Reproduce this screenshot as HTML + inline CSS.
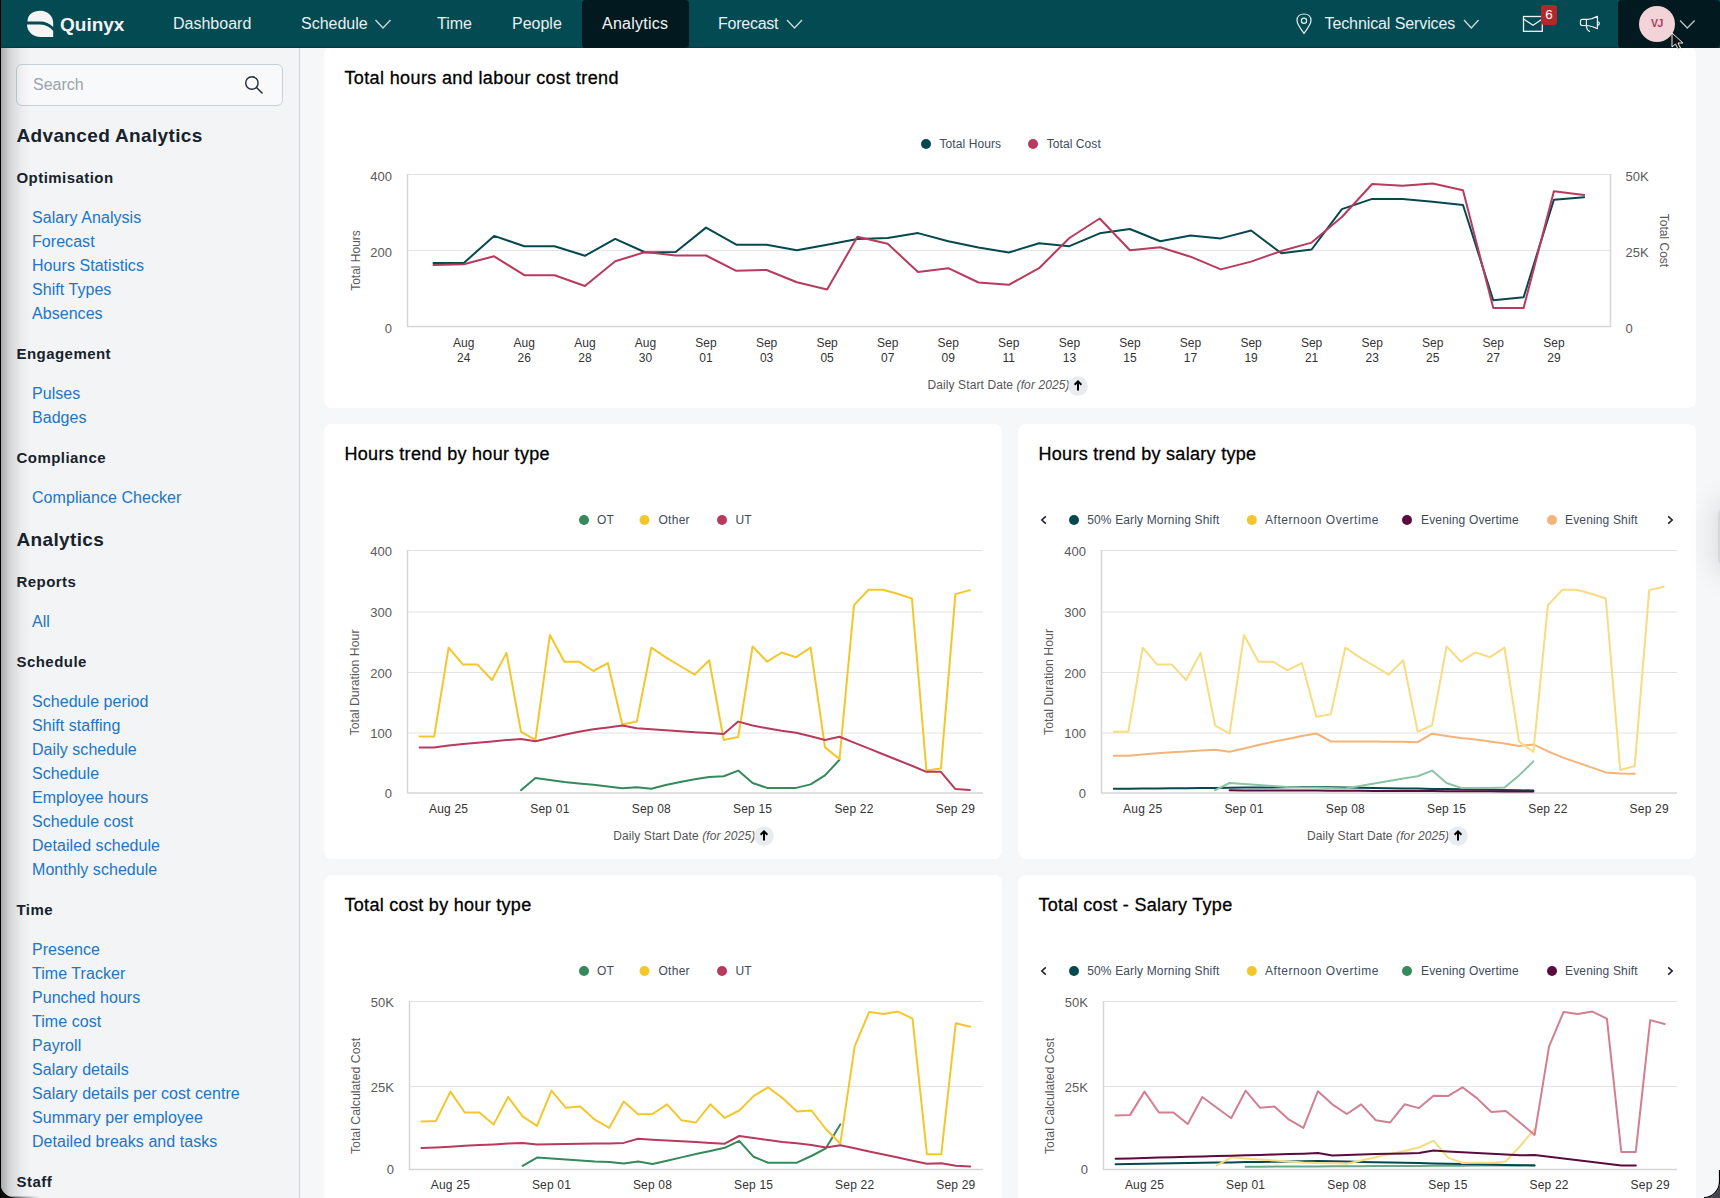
<!DOCTYPE html><html><head><meta charset="utf-8"><style>
html,body{margin:0;padding:0;width:1720px;height:1198px;overflow:hidden;background:#f6f7f9;font-family:"Liberation Sans", sans-serif;}
.abs{position:absolute;}
</style></head><body>
<div class="abs" style="left:300px;top:48px;width:1420px;height:1150px;background:#f6f7f9"></div>
<div class="abs" style="left:324px;top:47px;width:1372px;height:361px;background:#fff;border-radius:8px"></div>
<div class="abs" style="left:324px;top:424px;width:678px;height:435px;background:#fff;border-radius:8px"></div>
<div class="abs" style="left:1018px;top:424px;width:678px;height:435px;background:#fff;border-radius:8px"></div>
<div class="abs" style="left:324px;top:875px;width:678px;height:400px;background:#fff;border-radius:8px"></div>
<div class="abs" style="left:1018px;top:875px;width:678px;height:400px;background:#fff;border-radius:8px"></div>
<div class="abs" style="left:0;top:48px;width:299px;height:1150px;background:#f3f4f6;border-right:1px solid #c9d3dc"></div>
<div class="abs" style="left:16px;top:64px;width:265px;height:40px;background:#f8f9fb;border:1px solid #c6d1db;border-radius:6px"></div>
<div class="abs" style="left:1718px;top:503px;width:40px;height:68px;border-radius:14px;background:#d8d8dc;box-shadow:0 0 26px 6px rgba(0,0,0,0.10)"></div>
<div class="abs" style="left:1px;top:48px;width:30px;height:1150px;background:linear-gradient(to right,rgba(0,0,0,0.30),rgba(0,0,0,0.12) 30%,rgba(0,0,0,0.03) 70%,rgba(0,0,0,0))"></div>
<div class="abs" style="left:0;top:0;width:1720px;height:48px;background:#034a53"></div>
<div class="abs" style="left:0;top:47px;width:1720px;height:1px;background:#023a43"></div>
<div class="abs" style="left:582px;top:0;width:107px;height:48px;background:#021a1f;border-radius:4px"></div>
<div class="abs" style="left:1618px;top:0;width:102px;height:48px;background:#021a1f;border-radius:4px"></div>
<div class="abs" style="left:0;top:0;width:1px;height:1198px;background:#000;z-index:5"></div>
<svg class="abs" style="left:0;top:0" width="1720" height="1198" viewBox="0 0 1720 1198" font-family=""Liberation Sans", sans-serif">
<path d="M27.5,21.5 C27.5,14.5 33,10.8 40.5,10.8 C47.5,10.8 53.2,16 53.2,23 L53.2,27 C50,23.5 45,21.5 40,21.5 Z" fill="#f4f4f4"/>
<path d="M27,24.5 L40,24.5 C46,24.5 50.5,27.5 53.2,31 L53.2,37 L40.5,37 C33,37 27,31.5 27,24.5 Z" fill="#f4f4f4"/>
<text x="60" y="31" font-size="19" fill="#f4f4f4" text-anchor="start" font-weight="bold" font-style="normal" >Quinyx</text>
<text x="173" y="29" font-size="16" fill="#e9eff0" text-anchor="start" font-weight="normal" font-style="normal" >Dashboard</text>
<text x="301" y="29" font-size="16" fill="#e9eff0" text-anchor="start" font-weight="normal" font-style="normal" >Schedule</text>
<polyline points="375.5,20 383,28 390.5,20" fill="none" stroke="#cfdadc" stroke-width="1.3"/>
<text x="437" y="29" font-size="16" fill="#e9eff0" text-anchor="start" font-weight="normal" font-style="normal" >Time</text>
<text x="512" y="29" font-size="16" fill="#e9eff0" text-anchor="start" font-weight="normal" font-style="normal" >People</text>
<text x="602" y="29" font-size="16" fill="#f2f5f5" text-anchor="start" font-weight="normal" font-style="normal" letter-spacing="0.25" >Analytics</text>
<text x="718" y="29" font-size="16" fill="#e9eff0" text-anchor="start" font-weight="normal" font-style="normal" letter-spacing="-0.25" >Forecast</text>
<polyline points="787,20 794.5,28 802,20" fill="none" stroke="#cfdadc" stroke-width="1.3"/>
<path d="M1304,33.5 C1300,28 1297,24 1297,20.5 C1297,16.5 1300,14 1304,14 C1308,14 1311,16.5 1311,20.5 C1311,24 1308,28 1304,33.5 Z" fill="none" stroke="#e9eff0" stroke-width="1.2"/>
<circle cx="1304" cy="20.8" r="2.6" fill="none" stroke="#e9eff0" stroke-width="1.2"/>
<text x="1324.5" y="28.6" font-size="16" fill="#e9eff0" text-anchor="start" font-weight="normal" font-style="normal" letter-spacing="-0.1" >Technical Services</text>
<polyline points="1464,20 1471.3,28 1478.6,20" fill="none" stroke="#cfdadc" stroke-width="1.3"/>
<rect x="1523.5" y="16.5" width="18.8" height="14.8" fill="none" stroke="#f0f4f4" stroke-width="1.3"/>
<polyline points="1524,19.2 1533,25.3 1542,19.2" fill="none" stroke="#f0f4f4" stroke-width="1.3"/>
<rect x="1541" y="5" width="16" height="20" rx="3" fill="#b3282d"/>
<text x="1549" y="19.2" font-size="13.5" fill="#fff" text-anchor="middle" font-weight="normal" font-style="normal" >6</text>
<path d="M1597.4,16.3 L1597.4,28.6 L1592.7,26.7 L1588.7,25.8 L1582.3,25.5 Q1580.4,25.5 1580.4,23.5 L1580.4,21.3 Q1580.4,19.3 1582.3,19.3 L1588.5,19.3 L1592,18.6 Z M1586.4,19.3 L1586.4,26 C1586.4,28.5 1587.5,30.3 1589.5,31.5 M1597.5,21.9 C1600,21.9 1600,25.3 1597.5,25.3" fill="none" stroke="#f0f4f4" stroke-width="1.15" stroke-linejoin="round" stroke-linecap="round"/>
<circle cx="1657" cy="24" r="18" fill="#f2d4d8"/>
<text x="1657" y="27.2" font-size="10.5" fill="#b8385c" text-anchor="middle" font-weight="bold" font-style="normal" letter-spacing="-0.4" >VJ</text>
<polyline points="1680,20.5 1687.3,28 1694.6,20.5" fill="none" stroke="#b9c4c6" stroke-width="1.3"/>
<path d="M1672,33 L1672,47 L1675.5,44 L1678,49 L1680.5,48 L1678,43 L1683,43 Z" fill="#111" stroke="#eee" stroke-width="1"/>
<text x="33" y="90" font-size="16" fill="#9ba3ab" text-anchor="start" font-weight="normal" font-style="normal" >Search</text>
<circle cx="251.9" cy="83" r="6.2" fill="none" stroke="#1f2a33" stroke-width="1.4"/>
<line x1="256.5" y1="87.5" x2="262.5" y2="93.5" stroke="#1f2a33" stroke-width="1.4"/>
<text x="16.5" y="142" font-size="19" fill="#17222c" text-anchor="start" font-weight="bold" font-style="normal" letter-spacing="0.35" >Advanced Analytics</text>
<text x="16.5" y="183" font-size="15" fill="#17222c" text-anchor="start" font-weight="bold" font-style="normal" letter-spacing="0.45" >Optimisation</text>
<text x="32" y="223" font-size="16" fill="#2176c3" text-anchor="start" font-weight="normal" font-style="normal" letter-spacing="0.05" >Salary Analysis</text>
<text x="32" y="247" font-size="16" fill="#2176c3" text-anchor="start" font-weight="normal" font-style="normal" letter-spacing="0.05" >Forecast</text>
<text x="32" y="271" font-size="16" fill="#2176c3" text-anchor="start" font-weight="normal" font-style="normal" letter-spacing="0.05" >Hours Statistics</text>
<text x="32" y="295" font-size="16" fill="#2176c3" text-anchor="start" font-weight="normal" font-style="normal" letter-spacing="0.05" >Shift Types</text>
<text x="32" y="319" font-size="16" fill="#2176c3" text-anchor="start" font-weight="normal" font-style="normal" letter-spacing="0.05" >Absences</text>
<text x="16.5" y="359" font-size="15" fill="#17222c" text-anchor="start" font-weight="bold" font-style="normal" letter-spacing="0.45" >Engagement</text>
<text x="32" y="399" font-size="16" fill="#2176c3" text-anchor="start" font-weight="normal" font-style="normal" letter-spacing="0.05" >Pulses</text>
<text x="32" y="423" font-size="16" fill="#2176c3" text-anchor="start" font-weight="normal" font-style="normal" letter-spacing="0.05" >Badges</text>
<text x="16.5" y="463" font-size="15" fill="#17222c" text-anchor="start" font-weight="bold" font-style="normal" letter-spacing="0.45" >Compliance</text>
<text x="32" y="503" font-size="16" fill="#2176c3" text-anchor="start" font-weight="normal" font-style="normal" letter-spacing="0.05" >Compliance Checker</text>
<text x="16.5" y="546" font-size="19" fill="#17222c" text-anchor="start" font-weight="bold" font-style="normal" letter-spacing="0.35" >Analytics</text>
<text x="16.5" y="587" font-size="15" fill="#17222c" text-anchor="start" font-weight="bold" font-style="normal" letter-spacing="0.45" >Reports</text>
<text x="32" y="627" font-size="16" fill="#2176c3" text-anchor="start" font-weight="normal" font-style="normal" letter-spacing="0.05" >All</text>
<text x="16.5" y="667" font-size="15" fill="#17222c" text-anchor="start" font-weight="bold" font-style="normal" letter-spacing="0.45" >Schedule</text>
<text x="32" y="707" font-size="16" fill="#2176c3" text-anchor="start" font-weight="normal" font-style="normal" letter-spacing="0.05" >Schedule period</text>
<text x="32" y="731" font-size="16" fill="#2176c3" text-anchor="start" font-weight="normal" font-style="normal" letter-spacing="0.05" >Shift staffing</text>
<text x="32" y="755" font-size="16" fill="#2176c3" text-anchor="start" font-weight="normal" font-style="normal" letter-spacing="0.05" >Daily schedule</text>
<text x="32" y="779" font-size="16" fill="#2176c3" text-anchor="start" font-weight="normal" font-style="normal" letter-spacing="0.05" >Schedule</text>
<text x="32" y="803" font-size="16" fill="#2176c3" text-anchor="start" font-weight="normal" font-style="normal" letter-spacing="0.05" >Employee hours</text>
<text x="32" y="827" font-size="16" fill="#2176c3" text-anchor="start" font-weight="normal" font-style="normal" letter-spacing="0.05" >Schedule cost</text>
<text x="32" y="851" font-size="16" fill="#2176c3" text-anchor="start" font-weight="normal" font-style="normal" letter-spacing="0.05" >Detailed schedule</text>
<text x="32" y="875" font-size="16" fill="#2176c3" text-anchor="start" font-weight="normal" font-style="normal" letter-spacing="0.05" >Monthly schedule</text>
<text x="16.5" y="915" font-size="15" fill="#17222c" text-anchor="start" font-weight="bold" font-style="normal" letter-spacing="0.45" >Time</text>
<text x="32" y="955" font-size="16" fill="#2176c3" text-anchor="start" font-weight="normal" font-style="normal" letter-spacing="0.05" >Presence</text>
<text x="32" y="979" font-size="16" fill="#2176c3" text-anchor="start" font-weight="normal" font-style="normal" letter-spacing="0.05" >Time Tracker</text>
<text x="32" y="1003" font-size="16" fill="#2176c3" text-anchor="start" font-weight="normal" font-style="normal" letter-spacing="0.05" >Punched hours</text>
<text x="32" y="1027" font-size="16" fill="#2176c3" text-anchor="start" font-weight="normal" font-style="normal" letter-spacing="0.05" >Time cost</text>
<text x="32" y="1051" font-size="16" fill="#2176c3" text-anchor="start" font-weight="normal" font-style="normal" letter-spacing="0.05" >Payroll</text>
<text x="32" y="1075" font-size="16" fill="#2176c3" text-anchor="start" font-weight="normal" font-style="normal" letter-spacing="0.05" >Salary details</text>
<text x="32" y="1099" font-size="16" fill="#2176c3" text-anchor="start" font-weight="normal" font-style="normal" letter-spacing="0.05" >Salary details per cost centre</text>
<text x="32" y="1123" font-size="16" fill="#2176c3" text-anchor="start" font-weight="normal" font-style="normal" letter-spacing="0.05" >Summary per employee</text>
<text x="32" y="1147" font-size="16" fill="#2176c3" text-anchor="start" font-weight="normal" font-style="normal" letter-spacing="0.05" >Detailed breaks and tasks</text>
<text x="16.5" y="1187" font-size="15" fill="#17222c" text-anchor="start" font-weight="bold" font-style="normal" letter-spacing="0.45" >Staff</text>
<text x="344.5" y="84" font-size="18" fill="#000" text-anchor="start" font-weight="normal" font-style="normal" letter-spacing="0.37" stroke="#000" stroke-width="0.3">Total hours and labour cost trend</text>
<text x="344.5" y="460" font-size="18" fill="#000" text-anchor="start" font-weight="normal" font-style="normal" letter-spacing="0.3" stroke="#000" stroke-width="0.3">Hours trend by hour type</text>
<text x="1038.5" y="460" font-size="18" fill="#000" text-anchor="start" font-weight="normal" font-style="normal" letter-spacing="0.3" stroke="#000" stroke-width="0.3">Hours trend by salary type</text>
<text x="344.5" y="911" font-size="18" fill="#000" text-anchor="start" font-weight="normal" font-style="normal" letter-spacing="0.3" stroke="#000" stroke-width="0.3">Total cost by hour type</text>
<text x="1038.5" y="911" font-size="18" fill="#000" text-anchor="start" font-weight="normal" font-style="normal" letter-spacing="0.3" stroke="#000" stroke-width="0.3">Total cost - Salary Type</text>
<line x1="408" y1="174.5" x2="1611" y2="174.5" stroke="#e3e3e3" stroke-width="1"/>
<line x1="408" y1="250.5" x2="1611" y2="250.5" stroke="#e3e3e3" stroke-width="1"/>
<line x1="407.5" y1="174" x2="407.5" y2="327" stroke="#d6d6d6" stroke-width="1.5"/>
<line x1="1610.5" y1="174" x2="1610.5" y2="327" stroke="#d6d6d6" stroke-width="1.5"/>
<line x1="407" y1="326.5" x2="1611" y2="326.5" stroke="#d6d6d6" stroke-width="1.5"/>
<text x="392" y="181" font-size="13" fill="#5a5a5a" text-anchor="end" font-weight="normal" font-style="normal" >400</text>
<text x="392" y="257" font-size="13" fill="#5a5a5a" text-anchor="end" font-weight="normal" font-style="normal" >200</text>
<text x="392" y="333" font-size="13" fill="#5a5a5a" text-anchor="end" font-weight="normal" font-style="normal" >0</text>
<text x="1625.5" y="181" font-size="13" fill="#5a5a5a" text-anchor="start" font-weight="normal" font-style="normal" >50K</text>
<text x="1625.5" y="257" font-size="13" fill="#5a5a5a" text-anchor="start" font-weight="normal" font-style="normal" >25K</text>
<text x="1625.5" y="333" font-size="13" fill="#5a5a5a" text-anchor="start" font-weight="normal" font-style="normal" >0</text>
<text x="0" y="0" font-size="12" fill="#5a5a5a" text-anchor="middle" font-weight="normal" font-style="normal" transform="translate(360,260.5) rotate(-90)">Total Hours</text>
<text x="0" y="0" font-size="12" fill="#5a5a5a" text-anchor="middle" font-weight="normal" font-style="normal" transform="translate(1660,240.5) rotate(90)">Total Cost</text>
<text x="463.8" y="347" font-size="12" fill="#333" text-anchor="middle" font-weight="normal" font-style="normal" >Aug</text>
<text x="463.8" y="361.5" font-size="12" fill="#333" text-anchor="middle" font-weight="normal" font-style="normal" >24</text>
<text x="524.3" y="347" font-size="12" fill="#333" text-anchor="middle" font-weight="normal" font-style="normal" >Aug</text>
<text x="524.3" y="361.5" font-size="12" fill="#333" text-anchor="middle" font-weight="normal" font-style="normal" >26</text>
<text x="584.9" y="347" font-size="12" fill="#333" text-anchor="middle" font-weight="normal" font-style="normal" >Aug</text>
<text x="584.9" y="361.5" font-size="12" fill="#333" text-anchor="middle" font-weight="normal" font-style="normal" >28</text>
<text x="645.5" y="347" font-size="12" fill="#333" text-anchor="middle" font-weight="normal" font-style="normal" >Aug</text>
<text x="645.5" y="361.5" font-size="12" fill="#333" text-anchor="middle" font-weight="normal" font-style="normal" >30</text>
<text x="706.0" y="347" font-size="12" fill="#333" text-anchor="middle" font-weight="normal" font-style="normal" >Sep</text>
<text x="706.0" y="361.5" font-size="12" fill="#333" text-anchor="middle" font-weight="normal" font-style="normal" >01</text>
<text x="766.6" y="347" font-size="12" fill="#333" text-anchor="middle" font-weight="normal" font-style="normal" >Sep</text>
<text x="766.6" y="361.5" font-size="12" fill="#333" text-anchor="middle" font-weight="normal" font-style="normal" >03</text>
<text x="827.1" y="347" font-size="12" fill="#333" text-anchor="middle" font-weight="normal" font-style="normal" >Sep</text>
<text x="827.1" y="361.5" font-size="12" fill="#333" text-anchor="middle" font-weight="normal" font-style="normal" >05</text>
<text x="887.7" y="347" font-size="12" fill="#333" text-anchor="middle" font-weight="normal" font-style="normal" >Sep</text>
<text x="887.7" y="361.5" font-size="12" fill="#333" text-anchor="middle" font-weight="normal" font-style="normal" >07</text>
<text x="948.3" y="347" font-size="12" fill="#333" text-anchor="middle" font-weight="normal" font-style="normal" >Sep</text>
<text x="948.3" y="361.5" font-size="12" fill="#333" text-anchor="middle" font-weight="normal" font-style="normal" >09</text>
<text x="1008.8" y="347" font-size="12" fill="#333" text-anchor="middle" font-weight="normal" font-style="normal" >Sep</text>
<text x="1008.8" y="361.5" font-size="12" fill="#333" text-anchor="middle" font-weight="normal" font-style="normal" >11</text>
<text x="1069.4" y="347" font-size="12" fill="#333" text-anchor="middle" font-weight="normal" font-style="normal" >Sep</text>
<text x="1069.4" y="361.5" font-size="12" fill="#333" text-anchor="middle" font-weight="normal" font-style="normal" >13</text>
<text x="1129.9" y="347" font-size="12" fill="#333" text-anchor="middle" font-weight="normal" font-style="normal" >Sep</text>
<text x="1129.9" y="361.5" font-size="12" fill="#333" text-anchor="middle" font-weight="normal" font-style="normal" >15</text>
<text x="1190.5" y="347" font-size="12" fill="#333" text-anchor="middle" font-weight="normal" font-style="normal" >Sep</text>
<text x="1190.5" y="361.5" font-size="12" fill="#333" text-anchor="middle" font-weight="normal" font-style="normal" >17</text>
<text x="1251.1" y="347" font-size="12" fill="#333" text-anchor="middle" font-weight="normal" font-style="normal" >Sep</text>
<text x="1251.1" y="361.5" font-size="12" fill="#333" text-anchor="middle" font-weight="normal" font-style="normal" >19</text>
<text x="1311.6" y="347" font-size="12" fill="#333" text-anchor="middle" font-weight="normal" font-style="normal" >Sep</text>
<text x="1311.6" y="361.5" font-size="12" fill="#333" text-anchor="middle" font-weight="normal" font-style="normal" >21</text>
<text x="1372.2" y="347" font-size="12" fill="#333" text-anchor="middle" font-weight="normal" font-style="normal" >Sep</text>
<text x="1372.2" y="361.5" font-size="12" fill="#333" text-anchor="middle" font-weight="normal" font-style="normal" >23</text>
<text x="1432.7" y="347" font-size="12" fill="#333" text-anchor="middle" font-weight="normal" font-style="normal" >Sep</text>
<text x="1432.7" y="361.5" font-size="12" fill="#333" text-anchor="middle" font-weight="normal" font-style="normal" >25</text>
<text x="1493.3" y="347" font-size="12" fill="#333" text-anchor="middle" font-weight="normal" font-style="normal" >Sep</text>
<text x="1493.3" y="361.5" font-size="12" fill="#333" text-anchor="middle" font-weight="normal" font-style="normal" >27</text>
<text x="1553.9" y="347" font-size="12" fill="#333" text-anchor="middle" font-weight="normal" font-style="normal" >Sep</text>
<text x="1553.9" y="361.5" font-size="12" fill="#333" text-anchor="middle" font-weight="normal" font-style="normal" >29</text>
<text x="927.5" y="389" font-size="12" fill="#555" text-anchor="start" font-weight="normal" font-style="normal" letter-spacing="0.1" >Daily Start Date <tspan font-style="italic">(for 2025)</tspan></text>
<circle cx="1078" cy="386" r="9.8" fill="#e8ebf0"/>
<path d="M1074.6,384.8 L1078,381.4 L1081.4,384.8 M1078,381.6 L1078,390.6" fill="none" stroke="#000" stroke-width="2" stroke-linecap="butt" stroke-linejoin="miter"/>
<circle cx="926" cy="144" r="5" fill="#064850"/>
<text x="939.5" y="147.7" font-size="12" fill="#404b5c" text-anchor="start" font-weight="normal" font-style="normal" letter-spacing="0.08" >Total Hours</text>
<circle cx="1033" cy="144" r="5" fill="#b83a5c"/>
<text x="1046.7" y="147.7" font-size="12" fill="#404b5c" text-anchor="start" font-weight="normal" font-style="normal" letter-spacing="0.08" >Total Cost</text>
<polyline points="433.5,263.0 463.8,263.0 494.1,235.9 524.3,246.2 554.6,246.2 584.9,255.8 615.2,238.9 645.5,252.5 675.7,252.0 706.0,227.6 736.3,244.7 766.6,244.7 796.9,250.2 827.1,244.7 857.4,238.9 887.7,238.0 918.0,233.1 948.3,241.2 978.5,247.5 1008.8,252.5 1039.1,243.3 1069.4,246.2 1099.7,233.3 1129.9,229.0 1160.2,241.2 1190.5,235.4 1220.8,238.4 1251.1,230.5 1281.3,253.3 1311.6,249.5 1341.9,209.1 1372.2,198.9 1402.5,198.9 1432.7,201.8 1463.0,205.0 1493.3,300.2 1523.6,297.3 1553.9,199.7 1584.1,197.2" fill="none" stroke="#064850" stroke-width="2" stroke-linejoin="round" stroke-linecap="round" opacity="1"/>
<polyline points="433.5,265.0 463.8,264.2 494.1,256.3 524.3,275.2 554.6,275.2 584.9,286.0 615.2,261.2 645.5,252.0 675.7,255.5 706.0,255.5 736.3,270.8 766.6,270.0 796.9,282.2 827.1,289.5 857.4,236.8 887.7,243.8 918.0,272.0 948.3,268.2 978.5,282.5 1008.8,284.8 1039.1,268.2 1069.4,238.0 1099.7,218.5 1129.9,250.2 1160.2,247.3 1190.5,256.7 1220.8,269.4 1251.1,261.6 1281.3,251.0 1311.6,242.6 1341.9,217.0 1372.2,184.0 1402.5,185.7 1432.7,183.6 1463.0,190.3 1493.3,308.1 1523.6,308.1 1553.9,191.3 1584.1,195.1" fill="none" stroke="#b83a5c" stroke-width="2" stroke-linejoin="round" stroke-linecap="round" opacity="1"/>
<line x1="407" y1="550.5" x2="983" y2="550.5" stroke="#e3e3e3" stroke-width="1"/>
<line x1="407" y1="612" x2="983" y2="612" stroke="#e3e3e3" stroke-width="1"/>
<line x1="407" y1="672.5" x2="983" y2="672.5" stroke="#e3e3e3" stroke-width="1"/>
<line x1="407" y1="733" x2="983" y2="733" stroke="#e3e3e3" stroke-width="1"/>
<line x1="407.5" y1="550" x2="407.5" y2="793" stroke="#d6d6d6" stroke-width="1.5"/>
<line x1="407" y1="793" x2="983" y2="793" stroke="#d6d6d6" stroke-width="1.5"/>
<text x="392" y="555.8" font-size="13" fill="#5a5a5a" text-anchor="end" font-weight="normal" font-style="normal" >400</text>
<text x="392" y="617.3" font-size="13" fill="#5a5a5a" text-anchor="end" font-weight="normal" font-style="normal" >300</text>
<text x="392" y="677.8" font-size="13" fill="#5a5a5a" text-anchor="end" font-weight="normal" font-style="normal" >200</text>
<text x="392" y="738.3" font-size="13" fill="#5a5a5a" text-anchor="end" font-weight="normal" font-style="normal" >100</text>
<text x="392" y="797.8" font-size="13" fill="#5a5a5a" text-anchor="end" font-weight="normal" font-style="normal" >0</text>
<text x="0" y="0" font-size="12.3" fill="#5a5a5a" text-anchor="middle" font-weight="normal" font-style="normal" transform="translate(359,682.5) rotate(-90)">Total Duration Hour</text>
<text x="448.6" y="813" font-size="12" fill="#333" text-anchor="middle" font-weight="normal" font-style="normal" letter-spacing="0.2" >Aug 25</text>
<text x="549.9" y="813" font-size="12" fill="#333" text-anchor="middle" font-weight="normal" font-style="normal" letter-spacing="0.2" >Sep 01</text>
<text x="651.3" y="813" font-size="12" fill="#333" text-anchor="middle" font-weight="normal" font-style="normal" letter-spacing="0.2" >Sep 08</text>
<text x="752.6" y="813" font-size="12" fill="#333" text-anchor="middle" font-weight="normal" font-style="normal" letter-spacing="0.2" >Sep 15</text>
<text x="854.0" y="813" font-size="12" fill="#333" text-anchor="middle" font-weight="normal" font-style="normal" letter-spacing="0.2" >Sep 22</text>
<text x="955.4" y="813" font-size="12" fill="#333" text-anchor="middle" font-weight="normal" font-style="normal" letter-spacing="0.2" >Sep 29</text>
<line x1="1101" y1="550.5" x2="1677" y2="550.5" stroke="#e3e3e3" stroke-width="1"/>
<line x1="1101" y1="612" x2="1677" y2="612" stroke="#e3e3e3" stroke-width="1"/>
<line x1="1101" y1="672.5" x2="1677" y2="672.5" stroke="#e3e3e3" stroke-width="1"/>
<line x1="1101" y1="733" x2="1677" y2="733" stroke="#e3e3e3" stroke-width="1"/>
<line x1="1101.5" y1="550" x2="1101.5" y2="793" stroke="#d6d6d6" stroke-width="1.5"/>
<line x1="1101" y1="793" x2="1677" y2="793" stroke="#d6d6d6" stroke-width="1.5"/>
<text x="1086" y="555.8" font-size="13" fill="#5a5a5a" text-anchor="end" font-weight="normal" font-style="normal" >400</text>
<text x="1086" y="617.3" font-size="13" fill="#5a5a5a" text-anchor="end" font-weight="normal" font-style="normal" >300</text>
<text x="1086" y="677.8" font-size="13" fill="#5a5a5a" text-anchor="end" font-weight="normal" font-style="normal" >200</text>
<text x="1086" y="738.3" font-size="13" fill="#5a5a5a" text-anchor="end" font-weight="normal" font-style="normal" >100</text>
<text x="1086" y="797.8" font-size="13" fill="#5a5a5a" text-anchor="end" font-weight="normal" font-style="normal" >0</text>
<text x="0" y="0" font-size="12.3" fill="#5a5a5a" text-anchor="middle" font-weight="normal" font-style="normal" transform="translate(1053,682) rotate(-90)">Total Duration Hour</text>
<text x="1142.7" y="813" font-size="12" fill="#333" text-anchor="middle" font-weight="normal" font-style="normal" letter-spacing="0.2" >Aug 25</text>
<text x="1244.0" y="813" font-size="12" fill="#333" text-anchor="middle" font-weight="normal" font-style="normal" letter-spacing="0.2" >Sep 01</text>
<text x="1345.3" y="813" font-size="12" fill="#333" text-anchor="middle" font-weight="normal" font-style="normal" letter-spacing="0.2" >Sep 08</text>
<text x="1446.6" y="813" font-size="12" fill="#333" text-anchor="middle" font-weight="normal" font-style="normal" letter-spacing="0.2" >Sep 15</text>
<text x="1547.9" y="813" font-size="12" fill="#333" text-anchor="middle" font-weight="normal" font-style="normal" letter-spacing="0.2" >Sep 22</text>
<text x="1649.2" y="813" font-size="12" fill="#333" text-anchor="middle" font-weight="normal" font-style="normal" letter-spacing="0.2" >Sep 29</text>
<text x="613.2" y="840" font-size="12" fill="#555" text-anchor="start" font-weight="normal" font-style="normal" letter-spacing="0.1" >Daily Start Date <tspan font-style="italic">(for 2025)</tspan></text>
<circle cx="764" cy="836" r="9.8" fill="#e8ebf0"/>
<path d="M760.6,834.8 L764,831.4 L767.4,834.8 M764,831.6 L764,840.6" fill="none" stroke="#000" stroke-width="2" stroke-linecap="butt" stroke-linejoin="miter"/>
<text x="1307" y="840" font-size="12" fill="#555" text-anchor="start" font-weight="normal" font-style="normal" letter-spacing="0.1" >Daily Start Date <tspan font-style="italic">(for 2025)</tspan></text>
<circle cx="1458" cy="836" r="9.8" fill="#e8ebf0"/>
<path d="M1454.6,834.8 L1458,831.4 L1461.4,834.8 M1458,831.6 L1458,840.6" fill="none" stroke="#000" stroke-width="2" stroke-linecap="butt" stroke-linejoin="miter"/>
<line x1="409" y1="1001.5" x2="983" y2="1001.5" stroke="#e3e3e3" stroke-width="1"/>
<line x1="409" y1="1086.5" x2="983" y2="1086.5" stroke="#e3e3e3" stroke-width="1"/>
<line x1="409.5" y1="1001" x2="409.5" y2="1169.5" stroke="#d6d6d6" stroke-width="1.5"/>
<line x1="409" y1="1169.5" x2="983" y2="1169.5" stroke="#d6d6d6" stroke-width="1.5"/>
<text x="394" y="1006.8" font-size="13" fill="#5a5a5a" text-anchor="end" font-weight="normal" font-style="normal" >50K</text>
<text x="394" y="1091.8" font-size="13" fill="#5a5a5a" text-anchor="end" font-weight="normal" font-style="normal" >25K</text>
<text x="394" y="1174.3" font-size="13" fill="#5a5a5a" text-anchor="end" font-weight="normal" font-style="normal" >0</text>
<text x="0" y="0" font-size="12.3" fill="#5a5a5a" text-anchor="middle" font-weight="normal" font-style="normal" transform="translate(360,1096) rotate(-90)">Total Calculated Cost</text>
<text x="450.4" y="1188.6" font-size="12" fill="#333" text-anchor="middle" font-weight="normal" font-style="normal" letter-spacing="0.2" >Aug 25</text>
<text x="551.5" y="1188.6" font-size="12" fill="#333" text-anchor="middle" font-weight="normal" font-style="normal" letter-spacing="0.2" >Sep 01</text>
<text x="652.5" y="1188.6" font-size="12" fill="#333" text-anchor="middle" font-weight="normal" font-style="normal" letter-spacing="0.2" >Sep 08</text>
<text x="753.6" y="1188.6" font-size="12" fill="#333" text-anchor="middle" font-weight="normal" font-style="normal" letter-spacing="0.2" >Sep 15</text>
<text x="854.7" y="1188.6" font-size="12" fill="#333" text-anchor="middle" font-weight="normal" font-style="normal" letter-spacing="0.2" >Sep 22</text>
<text x="955.8" y="1188.6" font-size="12" fill="#333" text-anchor="middle" font-weight="normal" font-style="normal" letter-spacing="0.2" >Sep 29</text>
<line x1="1103" y1="1001.5" x2="1677" y2="1001.5" stroke="#e3e3e3" stroke-width="1"/>
<line x1="1103" y1="1086.5" x2="1677" y2="1086.5" stroke="#e3e3e3" stroke-width="1"/>
<line x1="1103.5" y1="1001" x2="1103.5" y2="1169.5" stroke="#d6d6d6" stroke-width="1.5"/>
<line x1="1103" y1="1169.5" x2="1677" y2="1169.5" stroke="#d6d6d6" stroke-width="1.5"/>
<text x="1088" y="1006.8" font-size="13" fill="#5a5a5a" text-anchor="end" font-weight="normal" font-style="normal" >50K</text>
<text x="1088" y="1091.8" font-size="13" fill="#5a5a5a" text-anchor="end" font-weight="normal" font-style="normal" >25K</text>
<text x="1088" y="1174.3" font-size="13" fill="#5a5a5a" text-anchor="end" font-weight="normal" font-style="normal" >0</text>
<text x="0" y="0" font-size="12.3" fill="#5a5a5a" text-anchor="middle" font-weight="normal" font-style="normal" transform="translate(1054,1096) rotate(-90)">Total Calculated Cost</text>
<text x="1144.5" y="1188.6" font-size="12" fill="#333" text-anchor="middle" font-weight="normal" font-style="normal" letter-spacing="0.2" >Aug 25</text>
<text x="1245.6" y="1188.6" font-size="12" fill="#333" text-anchor="middle" font-weight="normal" font-style="normal" letter-spacing="0.2" >Sep 01</text>
<text x="1346.8" y="1188.6" font-size="12" fill="#333" text-anchor="middle" font-weight="normal" font-style="normal" letter-spacing="0.2" >Sep 08</text>
<text x="1447.9" y="1188.6" font-size="12" fill="#333" text-anchor="middle" font-weight="normal" font-style="normal" letter-spacing="0.2" >Sep 15</text>
<text x="1549.1" y="1188.6" font-size="12" fill="#333" text-anchor="middle" font-weight="normal" font-style="normal" letter-spacing="0.2" >Sep 22</text>
<text x="1650.2" y="1188.6" font-size="12" fill="#333" text-anchor="middle" font-weight="normal" font-style="normal" letter-spacing="0.2" >Sep 29</text>
<circle cx="584" cy="520" r="5" fill="#35895a"/>
<text x="597" y="523.8" font-size="12" fill="#404b5c" text-anchor="start" font-weight="normal" font-style="normal" letter-spacing="0.2" >OT</text>
<circle cx="644.5" cy="520" r="5" fill="#f3c72c"/>
<text x="658.4" y="523.8" font-size="12" fill="#404b5c" text-anchor="start" font-weight="normal" font-style="normal" letter-spacing="0.3" >Other</text>
<circle cx="722" cy="520" r="5" fill="#b83a5c"/>
<text x="735.5" y="523.8" font-size="12" fill="#404b5c" text-anchor="start" font-weight="normal" font-style="normal" letter-spacing="0.1" >UT</text>
<circle cx="584" cy="971" r="5" fill="#35895a"/>
<text x="597" y="974.8" font-size="12" fill="#404b5c" text-anchor="start" font-weight="normal" font-style="normal" letter-spacing="0.2" >OT</text>
<circle cx="644.5" cy="971" r="5" fill="#f3c72c"/>
<text x="658.4" y="974.8" font-size="12" fill="#404b5c" text-anchor="start" font-weight="normal" font-style="normal" letter-spacing="0.3" >Other</text>
<circle cx="722" cy="971" r="5" fill="#b83a5c"/>
<text x="735.5" y="974.8" font-size="12" fill="#404b5c" text-anchor="start" font-weight="normal" font-style="normal" letter-spacing="0.1" >UT</text>
<path d="M1045.8,516.4 L1041.8,520 L1045.8,523.6" fill="none" stroke="#1a1a28" stroke-width="1.5"/>
<circle cx="1074" cy="520" r="5" fill="#064850"/>
<text x="1087.2" y="523.8" font-size="12" fill="#404b5c" text-anchor="start" font-weight="normal" font-style="normal" letter-spacing="0.15" >50% Early Morning Shift</text>
<circle cx="1251.8" cy="520" r="5" fill="#f3c72c"/>
<text x="1265" y="523.8" font-size="12" fill="#404b5c" text-anchor="start" font-weight="normal" font-style="normal" letter-spacing="0.55" >Afternoon Overtime</text>
<circle cx="1407" cy="520" r="5" fill="#5c0b3e"/>
<text x="1421" y="523.8" font-size="12" fill="#404b5c" text-anchor="start" font-weight="normal" font-style="normal" letter-spacing="0.15" >Evening Overtime</text>
<circle cx="1552" cy="520" r="5" fill="#f4b477"/>
<text x="1565" y="523.8" font-size="12" fill="#404b5c" text-anchor="start" font-weight="normal" font-style="normal" letter-spacing="0.15" >Evening Shift</text>
<path d="M1668.2,516.4 L1672.2,520 L1668.2,523.6" fill="none" stroke="#1a1a28" stroke-width="1.5"/>
<path d="M1045.8,967.4 L1041.8,971 L1045.8,974.6" fill="none" stroke="#1a1a28" stroke-width="1.5"/>
<circle cx="1074" cy="971" r="5" fill="#064850"/>
<text x="1087.2" y="974.8" font-size="12" fill="#404b5c" text-anchor="start" font-weight="normal" font-style="normal" letter-spacing="0.15" >50% Early Morning Shift</text>
<circle cx="1251.8" cy="971" r="5" fill="#f3c72c"/>
<text x="1265" y="974.8" font-size="12" fill="#404b5c" text-anchor="start" font-weight="normal" font-style="normal" letter-spacing="0.55" >Afternoon Overtime</text>
<circle cx="1407" cy="971" r="5" fill="#35895a"/>
<text x="1421" y="974.8" font-size="12" fill="#404b5c" text-anchor="start" font-weight="normal" font-style="normal" letter-spacing="0.15" >Evening Overtime</text>
<circle cx="1552" cy="971" r="5" fill="#5c0b3e"/>
<text x="1565" y="974.8" font-size="12" fill="#404b5c" text-anchor="start" font-weight="normal" font-style="normal" letter-spacing="0.15" >Evening Shift</text>
<path d="M1668.2,967.4 L1672.2,971 L1668.2,974.6" fill="none" stroke="#1a1a28" stroke-width="1.5"/>
<polyline points="521.0,790.2 535.4,777.9 549.9,780.0 564.4,782.0 578.9,783.4 593.4,784.8 607.8,786.5 622.3,788.2 636.8,787.3 651.3,788.8 665.8,785.0 680.2,782.0 694.7,779.2 709.2,777.0 723.7,776.3 738.2,770.6 752.6,783.0 767.1,787.9 781.6,787.9 796.1,787.9 810.6,784.4 825.0,775.4 839.5,759.8" fill="none" stroke="#35895a" stroke-width="2" stroke-linejoin="round" stroke-linecap="round" opacity="1"/>
<polyline points="419.6,736.6 434.1,736.6 448.6,647.7 463.0,664.6 477.5,664.6 492.0,680.0 506.5,652.9 521.0,731.8 535.4,739.9 549.9,634.9 564.4,661.7 578.9,661.7 593.4,671.0 607.8,663.1 622.3,724.5 636.8,721.6 651.3,647.7 665.8,657.3 680.2,666.0 694.7,674.6 709.2,660.2 723.7,739.9 738.2,737.0 752.6,646.4 767.1,661.7 781.6,652.5 796.1,657.2 810.6,647.6 825.0,747.4 839.5,759.0 854.0,605.1 868.5,589.7 883.0,589.7 897.4,593.7 911.9,598.5 926.4,770.4 940.9,768.4 955.4,594.1 969.8,590.1" fill="none" stroke="#f3c72c" stroke-width="2" stroke-linejoin="round" stroke-linecap="round" opacity="1"/>
<polyline points="419.6,747.5 434.1,747.5 448.6,745.6 463.0,744.0 477.5,742.7 492.0,741.4 506.5,740.0 521.0,738.9 535.4,741.2 549.9,738.0 564.4,734.7 578.9,731.8 593.4,729.3 607.8,727.5 622.3,725.5 636.8,728.3 651.3,729.3 665.8,730.3 680.2,731.2 694.7,732.2 709.2,733.1 723.7,734.1 738.2,721.6 752.6,725.5 767.1,728.3 781.6,730.8 796.1,732.7 810.6,736.3 825.0,740.0 839.5,736.8 854.0,742.6 868.5,748.4 883.0,754.2 897.4,760.0 911.9,765.8 926.4,771.8 940.9,771.8 955.4,789.1 969.8,789.9" fill="none" stroke="#b83a5c" stroke-width="2" stroke-linejoin="round" stroke-linecap="round" opacity="1"/>
<polyline points="1113.8,788.8 1128.3,788.7 1142.7,788.5 1157.2,788.4 1171.7,788.3 1186.1,788.2 1200.6,788.0 1215.1,787.9 1229.6,787.8 1244.0,787.6 1258.5,787.5 1273.0,787.4 1287.4,787.3 1301.9,787.1 1316.4,787.0 1330.8,787.2 1345.3,787.5 1359.8,787.7 1374.3,787.9 1388.7,788.2 1403.2,788.4 1417.7,788.6 1432.1,788.9 1446.6,789.1 1461.1,789.3 1475.5,789.6 1490.0,789.8 1504.5,790.0 1519.0,790.3 1533.4,790.5" fill="none" stroke="#064850" stroke-width="2" stroke-linejoin="round" stroke-linecap="round" opacity="1"/>
<polyline points="1229.6,790.3 1244.0,790.4 1258.5,790.4 1273.0,790.5 1287.4,790.5 1301.9,790.6 1316.4,790.6 1330.8,790.7 1345.3,790.8 1359.8,790.8 1374.3,790.9 1388.7,790.9 1403.2,791.0 1417.7,791.0 1432.1,791.1 1446.6,791.2 1461.1,791.2 1475.5,791.3 1490.0,791.3 1504.5,791.4 1519.0,791.4 1533.4,791.5" fill="none" stroke="#5c0b3e" stroke-width="2" stroke-linejoin="round" stroke-linecap="round" opacity="1"/>
<polyline points="1215.1,790.2 1229.6,783.0 1244.0,784.0 1258.5,785.0 1273.0,786.0 1287.4,787.0 1301.9,787.5 1316.4,787.5 1330.8,787.9 1345.3,788.5 1359.8,786.0 1374.3,783.5 1388.7,781.0 1403.2,778.6 1417.7,776.3 1432.1,770.6 1446.6,783.0 1461.1,787.9 1475.5,787.9 1490.0,787.9 1504.5,787.5 1519.0,775.4 1533.4,761.4" fill="none" stroke="#8cc3a2" stroke-width="2" stroke-linejoin="round" stroke-linecap="round" opacity="1"/>
<polyline points="1113.8,755.8 1128.3,755.8 1142.7,754.6 1157.2,753.3 1171.7,752.3 1186.1,751.4 1200.6,750.4 1215.1,749.8 1229.6,751.8 1244.0,748.5 1258.5,745.0 1273.0,741.8 1287.4,738.9 1301.9,736.0 1316.4,733.5 1330.8,741.4 1345.3,741.4 1359.8,741.5 1374.3,741.6 1388.7,741.7 1403.2,741.8 1417.7,742.2 1432.1,733.7 1446.6,736.0 1461.1,738.0 1475.5,739.6 1490.0,741.4 1504.5,743.4 1519.0,746.0 1533.4,744.4 1547.9,751.4 1562.4,757.4 1576.8,762.4 1591.3,767.4 1605.8,772.4 1620.2,773.4 1634.7,773.8" fill="none" stroke="#f4b477" stroke-width="2" stroke-linejoin="round" stroke-linecap="round" opacity="1"/>
<polyline points="1113.8,731.8 1128.3,731.8 1142.7,647.7 1157.2,664.6 1171.7,664.6 1186.1,680.0 1200.6,652.9 1215.1,725.5 1229.6,733.7 1244.0,634.9 1258.5,661.7 1273.0,661.7 1287.4,670.3 1301.9,663.1 1316.4,716.8 1330.8,714.3 1345.3,647.7 1359.8,657.3 1374.3,666.0 1388.7,674.6 1403.2,660.2 1417.7,731.8 1432.1,725.1 1446.6,646.4 1461.1,661.7 1475.5,652.4 1490.0,657.2 1504.5,647.6 1519.0,741.4 1533.4,752.0 1547.9,605.1 1562.4,589.7 1576.8,589.7 1591.3,593.7 1605.8,598.5 1620.2,770.0 1634.7,766.0 1649.2,590.1 1663.7,586.7" fill="none" stroke="#f8dc80" stroke-width="2" stroke-linejoin="round" stroke-linecap="round" opacity="1"/>
<polyline points="522.6,1165.8 537.0,1157.6 551.5,1158.5 565.9,1159.5 580.3,1160.5 594.8,1161.5 609.2,1161.9 623.7,1163.4 638.1,1161.4 652.5,1164.0 667.0,1160.7 681.4,1157.4 695.9,1154.1 710.3,1150.9 724.7,1147.8 739.2,1140.9 753.6,1156.8 768.1,1162.7 782.5,1162.7 796.9,1162.7 811.4,1156.0 825.8,1148.3 840.3,1124.4" fill="none" stroke="#35895a" stroke-width="2" stroke-linejoin="round" stroke-linecap="round" opacity="1"/>
<polyline points="421.5,1121.6 435.9,1121.0 450.4,1091.6 464.8,1112.5 479.3,1112.5 493.7,1124.4 508.1,1097.0 522.6,1116.3 537.0,1125.9 551.5,1090.7 565.9,1107.8 580.3,1106.6 594.8,1119.7 609.2,1127.9 623.7,1101.5 638.1,1114.3 652.5,1114.0 667.0,1104.3 681.4,1120.2 695.9,1122.5 710.3,1104.3 724.7,1117.9 739.2,1110.5 753.6,1096.1 768.1,1087.3 782.5,1098.1 796.9,1111.6 811.4,1110.5 825.8,1129.0 840.3,1143.7 854.7,1046.4 869.1,1012.1 883.6,1013.9 898.0,1011.6 912.5,1018.6 926.9,1154.2 941.3,1154.2 955.8,1023.2 970.2,1026.8" fill="none" stroke="#f3c72c" stroke-width="2" stroke-linejoin="round" stroke-linecap="round" opacity="1"/>
<polyline points="421.5,1148.0 435.9,1147.5 450.4,1146.7 464.8,1145.8 479.3,1145.0 493.7,1144.4 508.1,1143.6 522.6,1142.9 537.0,1144.4 551.5,1144.2 565.9,1144.0 580.3,1143.8 594.8,1143.6 609.2,1143.4 623.7,1142.9 638.1,1138.7 652.5,1139.8 667.0,1140.6 681.4,1141.3 695.9,1142.1 710.3,1142.9 724.7,1143.7 739.2,1136.0 753.6,1138.0 768.1,1140.1 782.5,1142.1 796.9,1143.3 811.4,1144.9 825.8,1147.5 840.3,1145.2 854.7,1148.3 869.1,1151.4 883.6,1154.5 898.0,1157.6 912.5,1160.7 926.9,1163.7 941.3,1163.3 955.8,1165.8 970.2,1166.4" fill="none" stroke="#b83a5c" stroke-width="2" stroke-linejoin="round" stroke-linecap="round" opacity="1"/>
<polyline points="1245.6,1166.8 1260.1,1166.7 1274.5,1166.6 1289.0,1166.6 1303.4,1166.5 1317.9,1166.4 1332.3,1166.3 1346.8,1166.3 1361.2,1166.2 1375.7,1166.1 1390.1,1166.0 1404.6,1166.0 1419.0,1165.9 1433.5,1165.8 1447.9,1165.8 1462.4,1165.7 1476.8,1165.6 1491.3,1165.5 1505.8,1165.5 1520.2,1165.4 1534.6,1165.3" fill="none" stroke="#6aa986" stroke-width="2" stroke-linejoin="round" stroke-linecap="round" opacity="1"/>
<polyline points="1115.6,1164.2 1130.0,1164.0 1144.5,1163.7 1158.9,1163.5 1173.4,1163.3 1187.8,1163.1 1202.3,1162.8 1216.8,1162.6 1231.2,1162.4 1245.6,1162.1 1260.1,1161.9 1274.5,1161.7 1289.0,1161.5 1303.4,1161.2 1317.9,1161.0 1332.3,1161.3 1346.8,1161.6 1361.2,1161.9 1375.7,1162.2 1390.1,1162.5 1404.6,1162.8 1419.0,1163.1 1433.5,1163.4 1447.9,1163.7 1462.4,1164.0 1476.8,1164.3 1491.3,1164.6 1505.8,1164.9 1520.2,1165.2 1534.6,1165.5" fill="none" stroke="#064850" stroke-width="2" stroke-linejoin="round" stroke-linecap="round" opacity="1"/>
<polyline points="1216.8,1165.3 1231.2,1157.3 1245.6,1158.5 1260.1,1159.5 1274.5,1160.5 1289.0,1161.5 1303.4,1162.5 1317.9,1163.0 1332.3,1163.2 1346.8,1163.7 1361.2,1160.5 1375.7,1157.3 1390.1,1154.1 1404.6,1150.9 1419.0,1147.5 1433.5,1140.6 1447.9,1157.6 1462.4,1163.0 1476.8,1162.7 1491.3,1162.7 1505.8,1161.4 1520.2,1146.0 1534.6,1129.0" fill="none" stroke="#f8dc80" stroke-width="2" stroke-linejoin="round" stroke-linecap="round" opacity="1"/>
<polyline points="1115.6,1158.8 1130.0,1158.4 1144.5,1158.0 1158.9,1157.6 1173.4,1157.2 1187.8,1156.8 1202.3,1156.4 1216.8,1156.1 1231.2,1155.7 1245.6,1155.3 1260.1,1154.9 1274.5,1154.5 1289.0,1154.1 1303.4,1153.7 1317.9,1153.0 1332.3,1155.6 1346.8,1155.0 1361.2,1154.5 1375.7,1154.0 1390.1,1153.7 1404.6,1153.4 1419.0,1153.0 1433.5,1150.6 1447.9,1151.4 1462.4,1152.2 1476.8,1153.0 1491.3,1153.7 1505.8,1154.5 1520.2,1155.3 1534.6,1155.0 1549.1,1156.8 1563.5,1158.5 1578.0,1160.3 1592.4,1162.1 1606.9,1163.8 1621.3,1165.6 1635.8,1165.6" fill="none" stroke="#5c0b3e" stroke-width="2" stroke-linejoin="round" stroke-linecap="round" opacity="1"/>
<polyline points="1115.6,1115.6 1130.0,1115.1 1144.5,1091.6 1158.9,1112.5 1173.4,1112.5 1187.8,1124.0 1202.3,1097.0 1216.8,1107.7 1231.2,1118.2 1245.6,1090.7 1260.1,1107.8 1274.5,1106.6 1289.0,1119.7 1303.4,1127.9 1317.9,1091.2 1332.3,1104.3 1346.8,1114.0 1361.2,1104.3 1375.7,1120.2 1390.1,1122.5 1404.6,1104.3 1419.0,1108.1 1433.5,1095.8 1447.9,1096.1 1462.4,1087.3 1476.8,1098.1 1491.3,1112.0 1505.8,1110.9 1520.2,1122.8 1534.6,1134.9 1549.1,1046.4 1563.5,1012.1 1578.0,1013.9 1592.4,1011.6 1606.9,1018.6 1621.3,1151.9 1635.8,1151.9 1650.2,1020.1 1664.7,1024.0" fill="none" stroke="#d27f92" stroke-width="2" stroke-linejoin="round" stroke-linecap="round" opacity="1"/>
<defs><linearGradient id="bg1" x1="0" x2="1" y1="0" y2="0"><stop offset="0" stop-color="#000" stop-opacity="0.9"/><stop offset="1" stop-color="#000" stop-opacity="0"/></linearGradient></defs>
<rect x="0" y="1196.5" width="40" height="1.5" fill="url(#bg1)"/>
<path d="M0,1182 A16,16 0 0 0 16,1198 L0,1198 Z" fill="#0d0d08"/>
<path d="M1720,1182 A16,16 0 0 1 1704,1198 L1720,1198 Z" fill="#454550"/>
<path d="M1719.5,1170 L1719.5,1182 A16,16 0 0 1 1704,1197.5" fill="none" stroke="#000" stroke-width="1.2"/>
</svg>
</body></html>
